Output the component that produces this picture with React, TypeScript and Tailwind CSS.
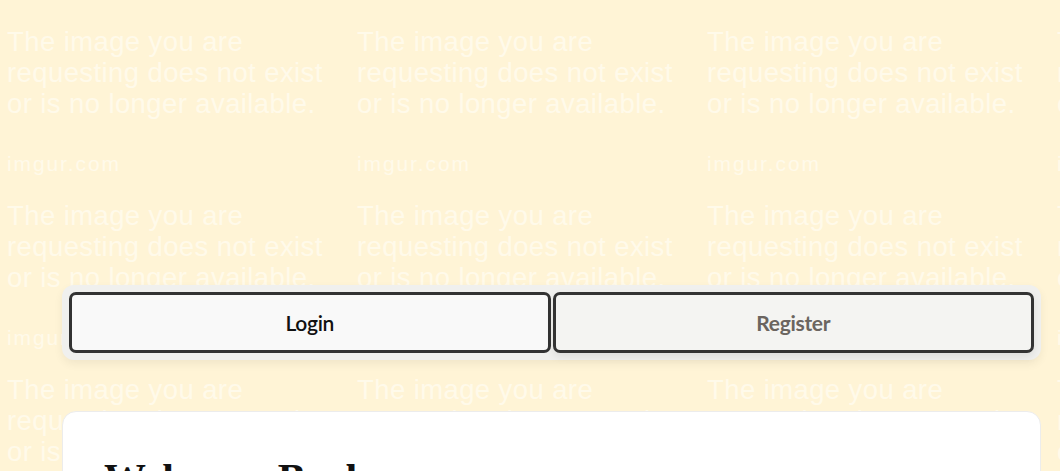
import React from "react";

const Tile = () => (
  <div className="w-[350px] h-[174px] shrink-0 pl-[7px] pt-[26px] text-[#fffaea] font-['Liberation_Sans',sans-serif]">
    <div className="text-[27.5px] leading-[31px] tracking-[0.4px] whitespace-nowrap">
      <div>The image you are</div>
      <div>requesting does not exist</div>
      <div>or is no longer available.</div>
    </div>
    <div className="mt-[33px] text-[21px] leading-[24px] tracking-[1.9px]">imgur.com</div>
  </div>
);

export default function App() {
  const rows = Array.from({ length: 3 });
  const cols = Array.from({ length: 4 });
  return (
    <div className="grid w-[1060px] h-[471px] overflow-hidden bg-[#fff4d6]">
      <div className="col-start-1 row-start-1 flex flex-col overflow-hidden">
        {rows.map((_, r) => (
          <div key={r} className="flex">
            {cols.map((_, c) => (
              <Tile key={c} />
            ))}
          </div>
        ))}
      </div>
      <div className="col-start-1 row-start-1 pt-[285px] pl-[62px]">
        <div className="w-[979px] flex gap-[2px] p-[7px] rounded-[12px] bg-[#f0f0ee] shadow-[0_4px_10px_rgba(0,0,0,0.06)]">
          <button className="flex-1 h-[61px] rounded-[7px] border-[3px] border-[#333333] bg-[#f9f9f9] text-[#111111] text-[21px] font-semibold font-['Lato',sans-serif] tracking-[-0.3px]">
            Login
          </button>
          <button className="flex-1 h-[61px] rounded-[7px] border-[3px] border-[#333333] bg-[#f4f4f2] text-[#6b6560] text-[21px] font-bold font-['Lato',sans-serif] tracking-[-0.3px] shadow-[0_4px_8px_rgba(0,0,0,0.08)]">
            Register
          </button>
        </div>
        <div className="mt-[51px] w-[979px] h-[200px] rounded-[14px] border border-[#ececec] bg-white px-[41px] pt-[43px]">
          <h1 className="text-[42px] leading-[48px] font-bold text-[#111111] font-['Liberation_Serif',serif]">
            Welcome Back
          </h1>
        </div>
      </div>
    </div>
  );
}
